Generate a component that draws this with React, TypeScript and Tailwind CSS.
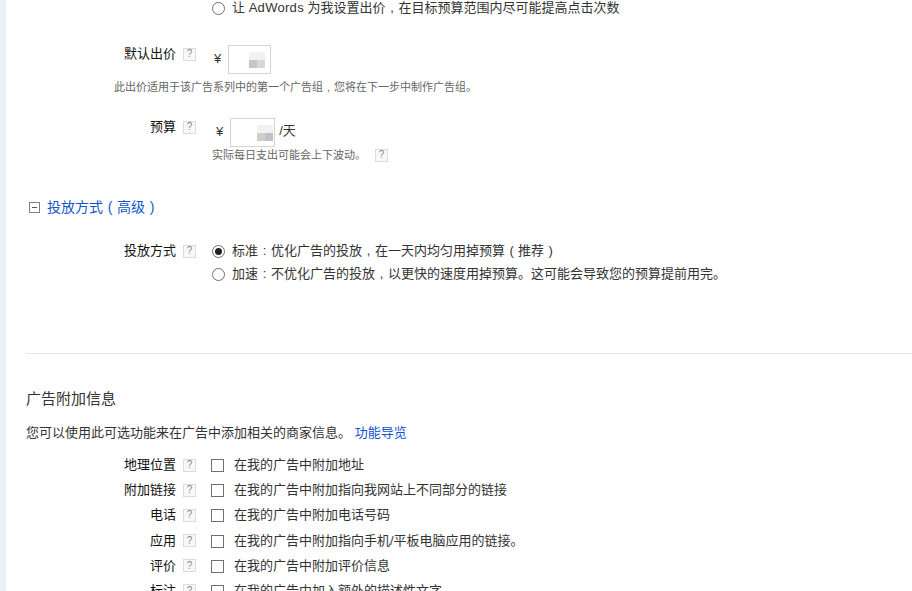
import React from 'react';

const cjk = { fontFamily: '"Liberation Sans", "Noto Sans CJK SC", sans-serif' };

const Help = () => (
    <span className="flex h-[13px] w-[13px] shrink-0 items-center justify-center border border-[#dcdcdc] bg-[#f8f8f8] text-[10px] leading-none text-[#888]">?</span>
);

// punctuation sits centred in a full square in the reference
const P = ({ c }: { c: string }) => <span className="inline-block w-[1em] text-center">{c}</span>;

const Radio = ({ checked }: { checked?: boolean }) => (
    <span className="flex h-[13px] w-[13px] shrink-0 items-center justify-center rounded-full border border-[#707070] bg-white">
        {checked && <span className="h-[7px] w-[7px] rounded-full bg-[#222]" />}
    </span>
);

const Label = ({ text }: { text: string }) => (
    <div className="ml-[-6px] flex w-[196px] shrink-0 items-center justify-end gap-[7px] text-[#111]">
        <span>{text}</span>
        <Help />
    </div>
);

// blurred figures in the amount boxes
const Blurred = ({ a, b, c }: { a: string; b: string; c: string }) => (
    <div className="flex flex-col items-end">
        <div className="flex"><span className={`h-2 w-[8px] ${c}`} /><span className={`h-2 w-[8px] ${c}`} /></div>
        <div className="flex"><span className={`h-2 w-[8px] ${a}`} /><span className={`h-2 w-[8px] ${b}`} /></div>
    </div>
);

const extensions = [
    ['地理位置', '在我的广告中附加地址'],
    ['附加链接', '在我的广告中附加指向我网站上不同部分的链接'],
    ['电话', '在我的广告中附加电话号码'],
    ['应用', '在我的广告中附加指向手机/平板电脑应用的链接。'],
    ['评价', '在我的广告中附加评价信息'],
    ['标注', '在我的广告中加入额外的描述性文字'],
];

export default function App() {
    return (
        <div className="flex h-[591px] w-[912px] overflow-hidden bg-white text-[13px] leading-[18px]" style={cjk}>
            <div className="w-[6px] shrink-0 bg-[#e9f1fb]" />
            <div className="min-w-0 flex-1">
                <div className="ml-[206px] flex h-[16px] items-center gap-[7px] text-[#333]">
                    <Radio />
                    <span>让 <span className="tracking-[0.3px]">AdWords</span> 为我设置出价<P c="," />在目标预算范围内尽可能提高点击次数</span>
                </div>

                <div className="mt-[29px] flex h-[29px] items-center">
                    <div className="mb-[11px]"><Label text="默认出价" /></div>
                    <span className="ml-[18px] mt-[-1px] text-[#333]">¥</span>
                    <div className="ml-[7px] flex h-[29px] w-[43px] items-center justify-end border border-[#d4d4d4] pr-[5px]">
                        <Blurred a="bg-[#c9c5c5]" b="bg-[#ddd5d5]" c="bg-[#f3f1f1]" />
                    </div>
                </div>
                <p className="ml-[108px] mt-[4px] text-[11px] text-[#666]">此出价适用于该广告系列中的第一个广告组<P c="," />您将在下一步中制作广告组。</p>

                <div className="mt-[22px] flex h-[29px] items-center">
                    <div className="mb-[11px]"><Label text="预算" /></div>
                    <span className="ml-[20px] mt-[-2px] text-[#333]">¥</span>
                    <div className="ml-[7px] flex h-[29px] w-[45px] items-center justify-end border border-[#d4d4d4] pr-[1px]">
                        <Blurred a="bg-[#d2cfcb]" b="bg-[#bfc0ca]" c="bg-[#f1f1f1]" />
                    </div>
                    <span className="ml-[4px] mt-[-3px] text-[#333]">/天</span>
                </div>
                <div className="ml-[206px] mt-[-1px] flex items-center gap-[9px] text-[11px] text-[#666]">
                    <span>实际每日支出可能会上下波动。</span>
                    <Help />
                </div>

                <div className="ml-[23px] mt-[34px] flex items-center gap-[7px]">
                    <span className="relative h-[11px] w-[11px] border border-[#808080]">
                        <span className="absolute left-[2px] top-[4px] h-px w-[5px] bg-[#555]" />
                    </span>
                    <span className="text-[14px] text-[#1155cc]">投放方式<P c="(" />高级<P c=")" /></span>
                </div>

                <div className="mt-[26px] flex h-[18px] items-center">
                    <Label text="投放方式" />
                    <div className="ml-[16px] flex items-center gap-[7px] text-[#333]">
                        <Radio checked />
                        <span>标准<P c=":" />优化广告的投放<P c="," />在一天内均匀用掉预算<P c="(" />推荐<P c=")" /></span>
                    </div>
                </div>
                <div className="ml-[206px] mt-[5px] flex h-[18px] items-center gap-[7px] text-[#333]">
                    <Radio />
                    <span>加速<P c=":" />不优化广告的投放<P c="," />以更快的速度用掉预算。这可能会导致您的预算提前用完。</span>
                </div>

                <div className="ml-[20px] mt-[70px] h-px bg-[#e5e5e5]" />

                <h2 className="ml-[20px] mt-[36px] text-[15px] font-normal leading-[18px] text-[#333]">广告附加信息</h2>
                <p className="ml-[20px] mt-[16px] text-[#333]">
                    您可以使用此可选功能来在广告中添加相关的商家信息。 <span className="text-[#1155cc]">功能导览</span>
                </p>

                <div className="mt-[14px] flex flex-col gap-[7.2px]">
                    {extensions.map(([name, desc]) => (
                        <div key={name} className="flex h-[18px] items-center">
                            <Label text={name} />
                            <span className="ml-[15px] mt-[1px] h-[13px] w-[13px] shrink-0 border border-[#707070] bg-white" />
                            <span className="ml-[10px] text-[#333]">{desc}</span>
                        </div>
                    ))}
                </div>
            </div>
        </div>
    );
}
